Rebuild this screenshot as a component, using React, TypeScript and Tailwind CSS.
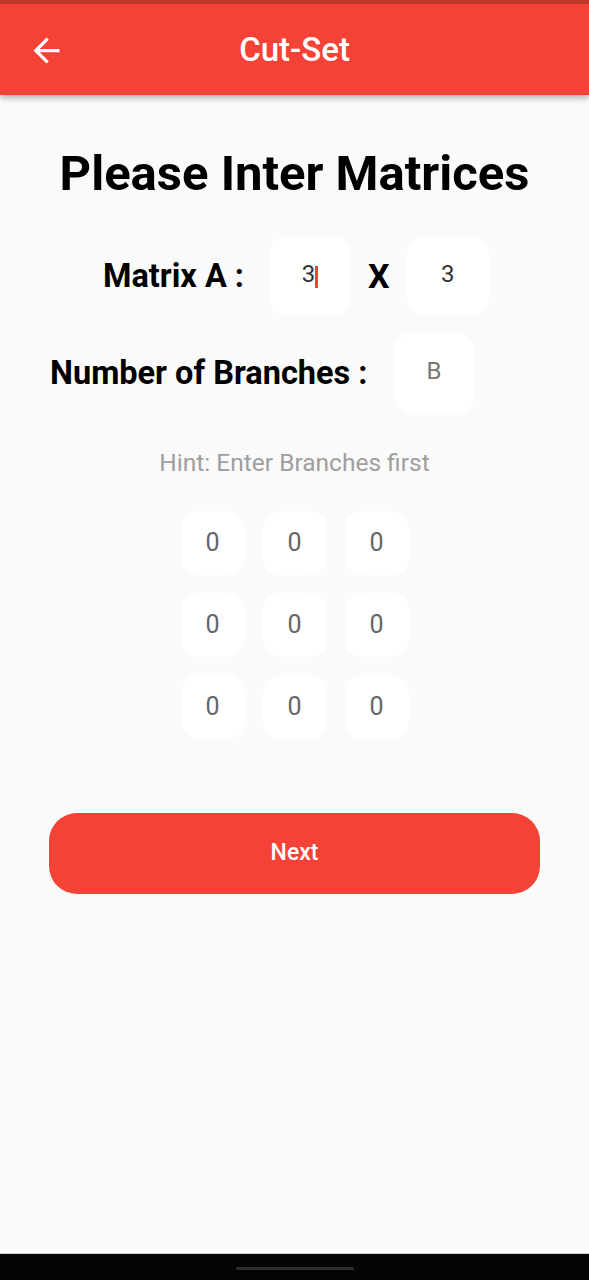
const grid = [
  ['0', '0', '0'],
  ['0', '0', '0'],
  ['0', '0', '0'],
]

function Box({ value, className, textClass, cursor }: { value: string; className: string; textClass: string; cursor?: boolean }) {
  return (
    <div className={`bg-white rounded-[18px] flex items-center justify-center ${className}`}>
      <span className={textClass}>{value}</span>
      {cursor && <span className="w-[3px] h-[22px] bg-[#f44336] relative top-[1px]" />}
    </div>
  )
}

export default function App() {
  return (
    <div className="w-[589px] h-[1280px] bg-[#fafafa] flex flex-col overflow-hidden" style={{ fontFamily: 'Roboto, "Liberation Sans", sans-serif' }}>
      <div className="h-[4px] bg-[#c0392b]" />
      <header className="h-[91px] bg-[#f44336] flex items-center relative shadow-[0_3px_6px_rgba(0,0,0,0.3)] z-10">
        <svg className="absolute left-[27px] top-[27px]" width="39" height="39" viewBox="0 0 24 24" fill="white">
          <path d="M20 11H7.83l5.59-5.59L12 4l-8 8 8 8 1.41-1.41L7.83 13H20v-2z" />
        </svg>
        <h1 className="w-full text-center text-white text-[33px] font-medium">Cut-Set</h1>
      </header>

      <main className="flex-1 flex flex-col items-center">
        <h2 className="mt-[51px] text-[49px] font-bold text-black leading-[56px]">Please Inter Matrices</h2>

        <div className="mt-[34px] self-start ml-[103px] flex items-center">
          <span className="text-[32.5px] font-bold text-black">Matrix A :</span>
          <Box value="3" cursor className="ml-[25px] w-[82px] h-[80px]" textClass="text-[24px] text-[#333] relative -top-[2px]" />
          <span className="mx-[17px] text-[34px] font-bold text-black">X</span>
          <Box value="3" className="w-[82px] h-[80px]" textClass="text-[24px] text-[#333] relative -top-[2px]" />
        </div>

        <div className="mt-[17px] self-start ml-[50px] flex items-center">
          <span className="text-[32.5px] font-bold text-black">Number of Branches :</span>
          <Box value="B" className="ml-[26px] w-[81px] h-[80px]" textClass="text-[24px] text-[#777] relative -top-[2px]" />
        </div>

        <p className="mt-[32px] text-[24.5px] text-[#9e9e9e]">Hint: Enter Branches first</p>

        <div className="mt-[29px] grid grid-cols-3 gap-[18px]">
          {grid.flat().map((v, i) => (
            <Box key={i} value={v} className="w-[64px] h-[64px] rounded-[16px]" textClass="text-[25px] text-[#666]" />
          ))}
        </div>

        <button className="mt-[74px] w-[491px] h-[81px] rounded-[28px] bg-[#f44336] text-white text-[23px] font-medium">
          Next
        </button>
      </main>

      <div className="h-[1px] bg-[#cfcfcf]" />
      <div className="h-[26px] bg-[#050505] flex justify-center pt-[13px]">
        <div className="w-[118px] h-[3px] bg-[#2e2e2e] rounded-full" />
      </div>
    </div>
  )
}
